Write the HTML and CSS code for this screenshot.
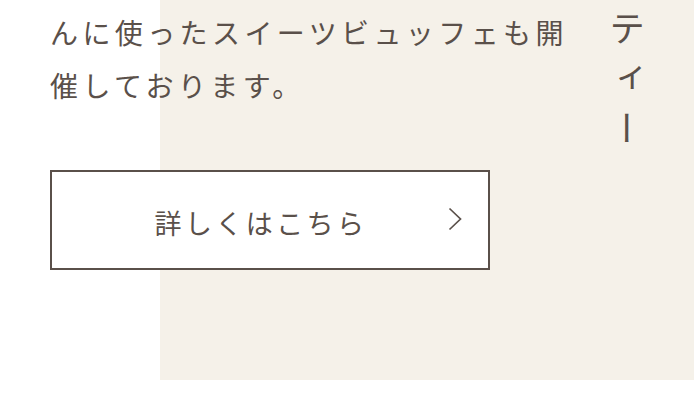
FILE: index.html
```html
<!DOCTYPE html>
<html lang="ja">
<head>
  <meta charset="UTF-8">
  <title>スイーツビュッフェ</title>
  <link rel="stylesheet" href="styles.css">
</head>
<body>

  <div class="feature">
    <div class="feature-body">
      <p class="feature-text">んに使ったスイーツビュッフェも開催しております。</p>
      <a class="more-btn" href="#">
        <span class="more-label">詳しくはこちら</span>
        <svg class="more-arrow" width="14" height="24" viewBox="0 0 14 24">
          <path d="M1.5 1.5 L12.5 12 L1.5 22.5" fill="none" stroke="#5a504a" stroke-width="1.7"/>
        </svg>
      </a>
    </div>
    <h2 class="feature-title">ティー</h2>
  </div>

</body>
</html>
```

FILE: styles.css
```css
body {
  margin: 0;
  background: #fff;
  color: #5a504a;
  font-family: "Noto Sans CJK JP", "Noto Sans", sans-serif;
}

.feature {
  display: flex;
  height: 380px;
  background: linear-gradient(to right, #fff 160px, #f5f1e9 160px);
}

.feature-body {
  width: 530px;
  padding: 6px 0 0 50px;
}

.feature-text {
  margin: 0;
  font-size: 28px;
  line-height: 53px;
  letter-spacing: 4.4px;
}

.more-btn {
  display: flex;
  align-items: center;
  box-sizing: border-box;
  width: 440px;
  height: 100px;
  margin-top: 58px;
  border: 2px solid #5a504a;
  background: #fff;
  color: #5a504a;
  text-decoration: none;
}

.more-label {
  flex: 1;
  text-align: center;
  padding: 4px 0 0 22px;
  font-size: 27px;
  letter-spacing: 3.4px;
}

.more-arrow {
  margin: 0 26px 2px 0;
}

.feature-title {
  margin: 0;
  padding: 10px 0 0 29px;
  writing-mode: vertical-rl;
  font-size: 36px;
  font-weight: 400;
  line-height: 36px;
  letter-spacing: 14px;
}
```
